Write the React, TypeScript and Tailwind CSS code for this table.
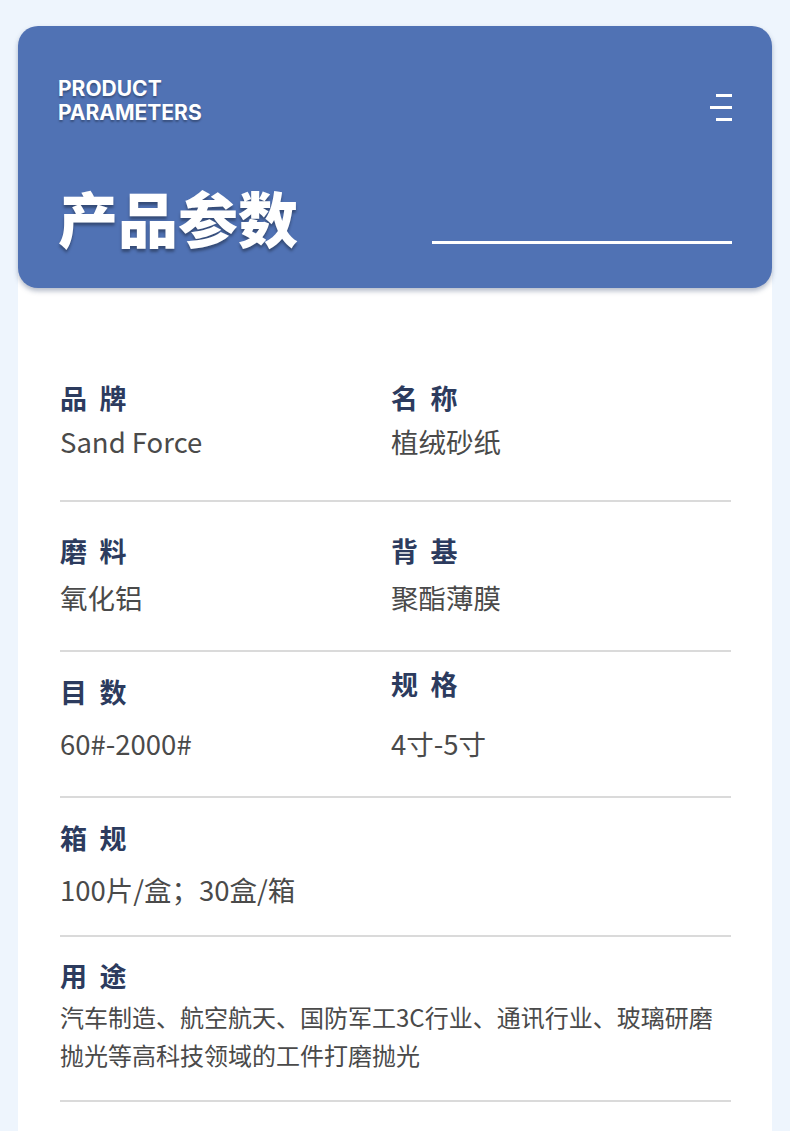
const labelCls =
  "text-[27px] leading-[32px] font-bold tracking-[0.12em] text-[#2c3b5e] [font-family:'Noto_Sans_CJK_SC',sans-serif]";
const valueCls =
  "text-[27.5px] leading-[36px] text-[#4a4a4a] [font-family:'Noto_Sans_CJK_SC',sans-serif]";

function Field({ label, value, gap, shift = 0 }: { label: string; value: string; gap: number; shift?: number }) {
  return (
    <div className="flex flex-col">
      <div className={labelCls} style={{ marginTop: shift, marginBottom: gap - shift }}>
        {label}
      </div>
      <div className={valueCls}>{value}</div>
    </div>
  );
}

function MenuIcon() {
  return (
    <div className="flex w-[22px] flex-col items-end gap-[9px] pt-[17px]">
      <span className="block h-[3px] w-[16px] bg-white" />
      <span className="block h-[3px] w-[22px] bg-white" />
      <span className="block h-[3px] w-[16px] bg-white" />
    </div>
  );
}

export default function App() {
  return (
    <div className="min-h-[1131px] bg-[#eef5fd] px-[18px] pt-[26px]">
      <div className="min-h-[1105px] rounded-t-[20px] bg-white">
        <header className="relative rounded-[20px] bg-[#5072b4] px-[40px] pb-[35px] pt-[51px] shadow-[0_3px_5px_rgba(40,60,100,0.35)]">
          <div className="flex items-start justify-between">
            <div className="text-[21px] font-bold uppercase leading-[24px] text-white [font-family:Inter,sans-serif] [text-shadow:0_2px_2px_rgba(0,0,0,0.3)]">
              <div>Product</div>
              <div>Parameters</div>
            </div>
            <MenuIcon />
          </div>
          <div className="mt-[56px] flex items-end justify-between">
            <h1 className="text-[60px] font-black leading-[72px] text-white [font-family:'Noto_Sans_CJK_SC',sans-serif] [text-shadow:0_3px_3px_rgba(0,0,0,0.35)]">
              产品参数
            </h1>
            <div className="mb-[9px] h-[3px] w-[300px] bg-white" />
          </div>
        </header>

        <div className="pl-[42px] pr-[41px]">
          <div className="border-b-2 border-[#dadada] pb-[41px] pt-[94px]">
            <div className="grid grid-cols-[331px_1fr]">
              <Field label="品 牌" value="Sand Force" gap={9} />
              <Field label="名 称" value="植绒砂纸" gap={9} />
            </div>
          </div>
          <div className="border-b-2 border-[#dadada] pb-[35px] pt-[33px]">
            <div className="grid grid-cols-[331px_1fr]">
              <Field label="磨 料" value="氧化铝" gap={12} />
              <Field label="背 基" value="聚酯薄膜" gap={12} />
            </div>
          </div>
          <div className="border-b-2 border-[#dadada] pb-[35px] pt-[16px]">
            <div className="grid grid-cols-[331px_1fr]">
              <Field label="目 数" value="60#-2000#" gap={25} shift={8} />
              <Field label="规 格" value="4寸-5寸" gap={25} />
            </div>
          </div>
          <div className="border-b-2 border-[#dadada] pb-[28px] pt-[24px]">
            <Field label="箱 规" value="100片/盒；30盒/箱" gap={17} />
          </div>
          <div className="border-b-2 border-[#dadada] pb-[26px] pt-[23px]">
            <div className={labelCls}>用 途</div>
            <p className="mt-[6px] text-[24px] leading-[38px] text-[#4a4a4a] [font-family:'Noto_Sans_CJK_SC',sans-serif]">
              汽车制造、航空航天、国防军工3C行业、通讯行业、玻璃研磨
              <br />
              抛光等高科技领域的工件打磨抛光
            </p>
          </div>
        </div>
      </div>
    </div>
  );
}
